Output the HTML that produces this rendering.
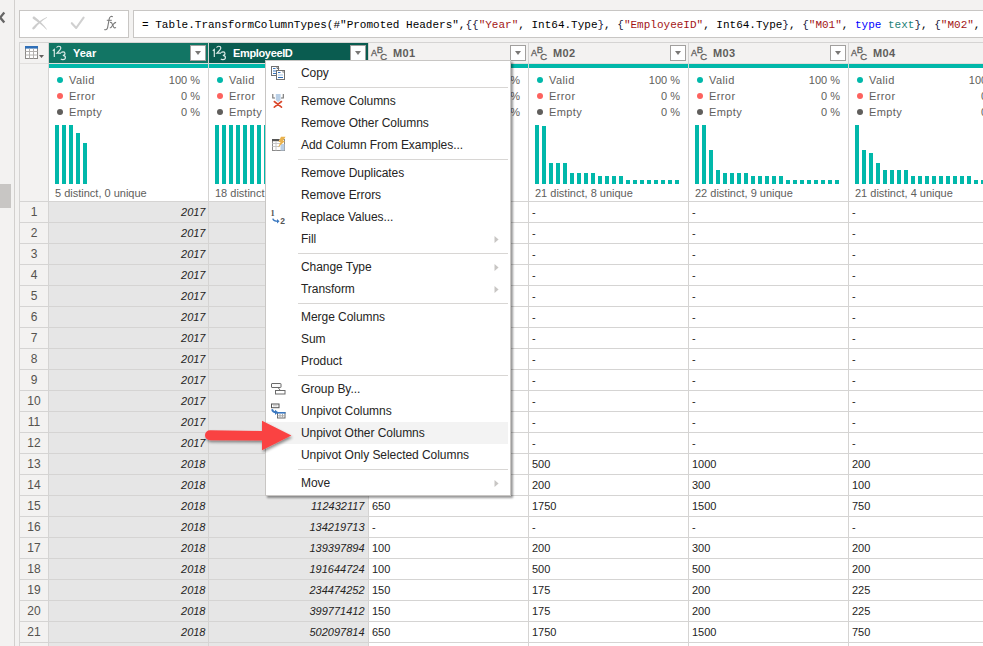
<!DOCTYPE html><html><head><meta charset="utf-8"><style>
*{margin:0;padding:0;box-sizing:border-box}
html,body{width:983px;height:646px;overflow:hidden;background:#f3f2f1}
body{position:relative;font-family:"Liberation Sans",sans-serif;color:#252423}
.a{position:absolute}
.t{position:absolute;white-space:nowrap;line-height:1}
.pl{font-size:11px;color:#605e5c}
.cell{font-size:11px;color:#252423}
.it{font-style:italic}
.mi{position:absolute;left:35px;font-size:12px;letter-spacing:-0.05px;color:#252423;white-space:nowrap;line-height:22px;height:22px}
.sep{position:absolute;left:32px;right:2px;height:1px;background:#d8d6d4}
.sub{position:absolute;left:228px;width:0;height:0;border-top:3.8px solid transparent;border-bottom:3.8px solid transparent;border-left:4.4px solid #c8c6c4}
svg{overflow:visible}
</style></head><body>
<div class="a" style="left:14px;top:0;width:1px;height:646px;background:#d2d0ce"></div>
<div class="a" style="left:0;top:184px;width:11px;height:24px;background:#c8c6c4"></div>
<svg class="a" style="left:0;top:0" width="14" height="40"><polyline points="4.3,12.6 0.2,17.6 4.3,22.6" fill="none" stroke="#666" stroke-width="2.3"/></svg>
<div class="a" style="left:19px;top:10px;width:110px;height:28px;background:#fff;border:1px solid #c8c6c4"></div>
<svg class="a" style="left:0;top:0" width="130" height="40"><path d="M32.6,18.2 C32.4,16.6 33.8,16.2 35,16.9 C39,19.6 43.5,24.5 47.1,29.4 C46.8,29.6 46.5,29.6 46.3,29.4 C42.5,25.5 37.5,21.5 33.3,19 Z" fill="#cdcdcd"/><path d="M33.6,29.5 C32.2,29.6 31.8,28.2 32.8,27.2 C36.5,23.5 41.5,19.5 46.9,17.1 C47.1,17.3 47.1,17.5 46.9,17.7 C42,20.5 38,24.5 35,28.6 Z" fill="#cdcdcd"/><polyline points="71.8,23.2 76.2,28 83.6,17.7" stroke="#d0d0d0" stroke-width="2.1" fill="none" stroke-linecap="round" stroke-linejoin="round"/><path d="M112.8,16.8 C111.2,15.9 109.7,16.6 109.2,18.8 L107.6,27.6 C107.1,29.6 105.6,30.1 104.3,29.4" stroke="#7a7a7a" stroke-width="1.1" fill="none"/><path d="M106.8,20.3 H111.8" stroke="#7a7a7a" stroke-width="1" fill="none"/><path d="M110,22.6 C110.9,22.1 111.6,22.5 112,23.5 L113.6,27 C114.1,28 115,28.1 116,27.4" stroke="#7a7a7a" stroke-width="1.1" fill="none"/><path d="M116.1,22.4 C115,22.4 114.2,23.1 113.2,24.3 L111.6,26.8 C111,27.7 110.3,27.9 109.8,27.6" stroke="#7a7a7a" stroke-width="1.1" fill="none"/></svg>
<div class="a" style="left:133px;top:10px;width:900px;height:28px;background:#fff;border:1px solid #c8c6c4"></div>
<div class="t" style="left:142px;top:20px;font-family:'Liberation Mono',monospace;font-size:11px;color:#000">= Table.TransformColumnTypes(#"Promoted Headers",<span style="color:#1a1a40">{</span><span style="color:#1a1a40">{</span><span style="color:#a31515">"Year"</span>, Int64.Type<span style="color:#1a1a40">}</span>, <span style="color:#1a1a40">{</span><span style="color:#a31515">"EmployeeID"</span>, Int64.Type<span style="color:#1a1a40">}</span>, <span style="color:#1a1a40">{</span><span style="color:#a31515">"M01"</span>, <span style="color:#0000ff">type</span> <span style="color:#1e8277">text</span><span style="color:#1a1a40">}</span>, <span style="color:#1a1a40">{</span><span style="color:#a31515">"M02"</span>, </div>
<div class="a" style="left:19px;top:42px;width:964px;height:1px;background:#d5d4d3"></div>
<div class="a" style="left:19px;top:42px;width:1px;height:604px;background:#d5d4d3"></div>
<div class="a" style="left:20px;top:63px;width:963px;height:1px;background:#e1dfdd"></div>
<div class="a" style="left:49px;top:68px;width:934px;height:133px;background:#fff"></div>
<div class="a" style="left:49px;top:202px;width:319px;height:444px;background:#e6e6e6"></div>
<div class="a" style="left:369px;top:202px;width:614px;height:444px;background:#fff"></div>
<div class="a" style="left:49px;top:43px;width:159px;height:20px;background:#127564"></div>
<div class="a" style="left:209px;top:43px;width:159px;height:20px;background:#0a5c50"></div>
<div class="a" style="left:49px;top:64px;width:934px;height:4px;background:#01b8aa"></div>
<div class="a" style="left:20px;top:201px;width:963px;height:1px;background:#d5d4d3"></div>
<div class="a" style="left:20px;top:222px;width:963px;height:1px;background:#d5d4d3"></div>
<div class="a" style="left:20px;top:243px;width:963px;height:1px;background:#d5d4d3"></div>
<div class="a" style="left:20px;top:264px;width:963px;height:1px;background:#d5d4d3"></div>
<div class="a" style="left:20px;top:285px;width:963px;height:1px;background:#d5d4d3"></div>
<div class="a" style="left:20px;top:306px;width:963px;height:1px;background:#d5d4d3"></div>
<div class="a" style="left:20px;top:327px;width:963px;height:1px;background:#d5d4d3"></div>
<div class="a" style="left:20px;top:348px;width:963px;height:1px;background:#d5d4d3"></div>
<div class="a" style="left:20px;top:369px;width:963px;height:1px;background:#d5d4d3"></div>
<div class="a" style="left:20px;top:390px;width:963px;height:1px;background:#d5d4d3"></div>
<div class="a" style="left:20px;top:411px;width:963px;height:1px;background:#d5d4d3"></div>
<div class="a" style="left:20px;top:432px;width:963px;height:1px;background:#d5d4d3"></div>
<div class="a" style="left:20px;top:453px;width:963px;height:1px;background:#d5d4d3"></div>
<div class="a" style="left:20px;top:474px;width:963px;height:1px;background:#d5d4d3"></div>
<div class="a" style="left:20px;top:495px;width:963px;height:1px;background:#d5d4d3"></div>
<div class="a" style="left:20px;top:516px;width:963px;height:1px;background:#d5d4d3"></div>
<div class="a" style="left:20px;top:537px;width:963px;height:1px;background:#d5d4d3"></div>
<div class="a" style="left:20px;top:558px;width:963px;height:1px;background:#d5d4d3"></div>
<div class="a" style="left:20px;top:579px;width:963px;height:1px;background:#d5d4d3"></div>
<div class="a" style="left:20px;top:600px;width:963px;height:1px;background:#d5d4d3"></div>
<div class="a" style="left:20px;top:621px;width:963px;height:1px;background:#d5d4d3"></div>
<div class="a" style="left:20px;top:642px;width:963px;height:1px;background:#d5d4d3"></div>
<div class="a" style="left:48px;top:42px;width:1px;height:604px;background:#d5d4d3"></div>
<div class="a" style="left:208px;top:42px;width:1px;height:604px;background:#d5d4d3"></div>
<div class="a" style="left:368px;top:42px;width:1px;height:604px;background:#d5d4d3"></div>
<div class="a" style="left:528px;top:42px;width:1px;height:604px;background:#d5d4d3"></div>
<div class="a" style="left:688px;top:42px;width:1px;height:604px;background:#d5d4d3"></div>
<div class="a" style="left:848px;top:42px;width:1px;height:604px;background:#d5d4d3"></div>
<svg class="a" style="left:24px;top:45px" width="22" height="16"><rect x="1.5" y="1.5" width="12" height="12" fill="#fff" stroke="#8a8886" stroke-width="1"/><rect x="1" y="1" width="13" height="2.6" fill="#2f6fb8"/><path d="M1.5,6.5 H13.5 M1.5,10 H13.5 M5.5,3.5 V13.5 M9.5,3.5 V13.5" stroke="#b3b1af" stroke-width="1"/><path d="M15,10 L20,10 L17.5,13 Z" fill="#605e5c"/></svg>
<svg class="a" style="left:0px;top:0" width="70" height="64"><g fill="none" stroke="#dcebe7" stroke-width="1.15"><path d="M52.8,50.7 L54.3,49.4 V56.9"/><path d="M56.6,47.6 C57,46.6 57.9,46.2 58.8,46.2 C60.1,46.2 60.8,47 60.8,48.1 C60.8,49.5 59.6,50.7 56.9,53.1 H61.1"/><path d="M61.2,52.6 C61.7,52 62.4,51.8 63.1,51.8 C64.3,51.8 65,52.5 65,53.5 C65,54.6 64.1,55.3 62.8,55.3 C64.4,55.3 65.4,56.1 65.4,57.4 C65.4,58.8 64.3,59.6 62.9,59.6 C62,59.6 61.3,59.3 60.8,58.8"/></g></svg>
<div class="t" style="left:73px;top:48px;font-size:11px;font-weight:bold;color:#fff">Year</div>
<div class="a" style="left:190px;top:45px;width:16px;height:16px;background:#fff;border:1px solid #a19f9d"></div><div class="a" style="left:194.5px;top:51px;width:0;height:0;border-left:3.5px solid transparent;border-right:3.5px solid transparent;border-top:4px solid #797775"></div>
<svg class="a" style="left:160px;top:0" width="70" height="64"><g fill="none" stroke="#dcebe7" stroke-width="1.15"><path d="M52.8,50.7 L54.3,49.4 V56.9"/><path d="M56.6,47.6 C57,46.6 57.9,46.2 58.8,46.2 C60.1,46.2 60.8,47 60.8,48.1 C60.8,49.5 59.6,50.7 56.9,53.1 H61.1"/><path d="M61.2,52.6 C61.7,52 62.4,51.8 63.1,51.8 C64.3,51.8 65,52.5 65,53.5 C65,54.6 64.1,55.3 62.8,55.3 C64.4,55.3 65.4,56.1 65.4,57.4 C65.4,58.8 64.3,59.6 62.9,59.6 C62,59.6 61.3,59.3 60.8,58.8"/></g></svg>
<div class="t" style="left:233px;top:48px;font-size:11px;font-weight:bold;letter-spacing:-0.35px;color:#fff">EmployeeID</div>
<div class="a" style="left:350px;top:45px;width:16px;height:16px;background:#fff;border:1px solid #a19f9d"></div><div class="a" style="left:354.5px;top:51px;width:0;height:0;border-left:3.5px solid transparent;border-right:3.5px solid transparent;border-top:4px solid #797775"></div>
<div class="t" style="left:371.1px;top:48.8px;font-size:9px;color:#5f5e5c;-webkit-text-stroke:0.3px #5f5e5c">A</div><div class="t" style="left:376.8px;top:44.8px;font-size:9.5px;color:#5f5e5c;-webkit-text-stroke:0.3px #5f5e5c">B</div><div class="t" style="left:380.2px;top:51.8px;font-size:9.5px;color:#5f5e5c;-webkit-text-stroke:0.3px #5f5e5c">C</div>
<div class="t" style="left:393px;top:48px;font-size:11px;font-weight:bold;letter-spacing:0.3px;color:#5f5d5b">M01</div>
<div class="a" style="left:510px;top:45px;width:16px;height:16px;background:#fff;border:1px solid #a19f9d"></div><div class="a" style="left:514.5px;top:51px;width:0;height:0;border-left:3.5px solid transparent;border-right:3.5px solid transparent;border-top:4px solid #797775"></div>
<div class="t" style="left:531.1px;top:48.8px;font-size:9px;color:#5f5e5c;-webkit-text-stroke:0.3px #5f5e5c">A</div><div class="t" style="left:536.8px;top:44.8px;font-size:9.5px;color:#5f5e5c;-webkit-text-stroke:0.3px #5f5e5c">B</div><div class="t" style="left:540.2px;top:51.8px;font-size:9.5px;color:#5f5e5c;-webkit-text-stroke:0.3px #5f5e5c">C</div>
<div class="t" style="left:553px;top:48px;font-size:11px;font-weight:bold;letter-spacing:0.3px;color:#5f5d5b">M02</div>
<div class="a" style="left:670px;top:45px;width:16px;height:16px;background:#fff;border:1px solid #a19f9d"></div><div class="a" style="left:674.5px;top:51px;width:0;height:0;border-left:3.5px solid transparent;border-right:3.5px solid transparent;border-top:4px solid #797775"></div>
<div class="t" style="left:691.1px;top:48.8px;font-size:9px;color:#5f5e5c;-webkit-text-stroke:0.3px #5f5e5c">A</div><div class="t" style="left:696.8px;top:44.8px;font-size:9.5px;color:#5f5e5c;-webkit-text-stroke:0.3px #5f5e5c">B</div><div class="t" style="left:700.2px;top:51.8px;font-size:9.5px;color:#5f5e5c;-webkit-text-stroke:0.3px #5f5e5c">C</div>
<div class="t" style="left:713px;top:48px;font-size:11px;font-weight:bold;letter-spacing:0.3px;color:#5f5d5b">M03</div>
<div class="a" style="left:830px;top:45px;width:16px;height:16px;background:#fff;border:1px solid #a19f9d"></div><div class="a" style="left:834.5px;top:51px;width:0;height:0;border-left:3.5px solid transparent;border-right:3.5px solid transparent;border-top:4px solid #797775"></div>
<div class="t" style="left:851.1px;top:48.8px;font-size:9px;color:#5f5e5c;-webkit-text-stroke:0.3px #5f5e5c">A</div><div class="t" style="left:856.8px;top:44.8px;font-size:9.5px;color:#5f5e5c;-webkit-text-stroke:0.3px #5f5e5c">B</div><div class="t" style="left:860.2px;top:51.8px;font-size:9.5px;color:#5f5e5c;-webkit-text-stroke:0.3px #5f5e5c">C</div>
<div class="t" style="left:873px;top:48px;font-size:11px;font-weight:bold;letter-spacing:0.3px;color:#5f5d5b">M04</div>
<div class="a" style="left:990px;top:45px;width:16px;height:16px;background:#fff;border:1px solid #a19f9d"></div><div class="a" style="left:994.5px;top:51px;width:0;height:0;border-left:3.5px solid transparent;border-right:3.5px solid transparent;border-top:4px solid #797775"></div>
<div class="a" style="left:57px;top:77px;width:6px;height:6px;border-radius:3px;background:#01b8aa"></div>
<div class="t pl" style="left:69px;top:75px;letter-spacing:0.4px">Valid</div>
<div class="t pl" style="left:129px;width:71px;text-align:right;top:75px">100 %</div>
<div class="a" style="left:57px;top:93px;width:6px;height:6px;border-radius:3px;background:#fd625e"></div>
<div class="t pl" style="left:69px;top:91px;letter-spacing:0.4px">Error</div>
<div class="t pl" style="left:129px;width:71px;text-align:right;top:91px">0 %</div>
<div class="a" style="left:57px;top:109px;width:6px;height:6px;border-radius:3px;background:#605e5c"></div>
<div class="t pl" style="left:69px;top:107px;letter-spacing:0.4px">Empty</div>
<div class="t pl" style="left:129px;width:71px;text-align:right;top:107px">0 %</div>
<div class="a" style="left:55px;top:125px;width:4px;height:59px;background:#01b8aa"></div>
<div class="a" style="left:62px;top:125px;width:4px;height:59px;background:#01b8aa"></div>
<div class="a" style="left:69px;top:125px;width:4px;height:59px;background:#01b8aa"></div>
<div class="a" style="left:76px;top:133px;width:4px;height:51px;background:#01b8aa"></div>
<div class="a" style="left:83px;top:143px;width:4px;height:41px;background:#01b8aa"></div>
<div class="t pl" style="left:55px;top:188px">5 distinct, 0 unique</div>
<div class="a" style="left:217px;top:77px;width:6px;height:6px;border-radius:3px;background:#01b8aa"></div>
<div class="t pl" style="left:229px;top:75px;letter-spacing:0.4px">Valid</div>
<div class="t pl" style="left:289px;width:71px;text-align:right;top:75px">100 %</div>
<div class="a" style="left:217px;top:93px;width:6px;height:6px;border-radius:3px;background:#fd625e"></div>
<div class="t pl" style="left:229px;top:91px;letter-spacing:0.4px">Error</div>
<div class="t pl" style="left:289px;width:71px;text-align:right;top:91px">0 %</div>
<div class="a" style="left:217px;top:109px;width:6px;height:6px;border-radius:3px;background:#605e5c"></div>
<div class="t pl" style="left:229px;top:107px;letter-spacing:0.4px">Empty</div>
<div class="t pl" style="left:289px;width:71px;text-align:right;top:107px">0 %</div>
<div class="a" style="left:215px;top:125px;width:4px;height:59px;background:#01b8aa"></div>
<div class="a" style="left:222px;top:125px;width:4px;height:59px;background:#01b8aa"></div>
<div class="a" style="left:229px;top:125px;width:4px;height:59px;background:#01b8aa"></div>
<div class="a" style="left:236px;top:125px;width:4px;height:59px;background:#01b8aa"></div>
<div class="a" style="left:243px;top:125px;width:4px;height:59px;background:#01b8aa"></div>
<div class="a" style="left:250px;top:125px;width:4px;height:59px;background:#01b8aa"></div>
<div class="a" style="left:257px;top:125px;width:4px;height:59px;background:#01b8aa"></div>
<div class="a" style="left:264px;top:125px;width:4px;height:59px;background:#01b8aa"></div>
<div class="a" style="left:271px;top:125px;width:4px;height:59px;background:#01b8aa"></div>
<div class="a" style="left:278px;top:125px;width:4px;height:59px;background:#01b8aa"></div>
<div class="a" style="left:285px;top:125px;width:4px;height:59px;background:#01b8aa"></div>
<div class="a" style="left:292px;top:125px;width:4px;height:59px;background:#01b8aa"></div>
<div class="a" style="left:299px;top:125px;width:4px;height:59px;background:#01b8aa"></div>
<div class="a" style="left:306px;top:125px;width:4px;height:59px;background:#01b8aa"></div>
<div class="a" style="left:313px;top:125px;width:4px;height:59px;background:#01b8aa"></div>
<div class="a" style="left:320px;top:125px;width:4px;height:59px;background:#01b8aa"></div>
<div class="a" style="left:327px;top:125px;width:4px;height:59px;background:#01b8aa"></div>
<div class="a" style="left:334px;top:125px;width:4px;height:59px;background:#01b8aa"></div>
<div class="t pl" style="left:215px;top:188px">18 distinct, 0 unique</div>
<div class="a" style="left:377px;top:77px;width:6px;height:6px;border-radius:3px;background:#01b8aa"></div>
<div class="t pl" style="left:389px;top:75px;letter-spacing:0.4px">Valid</div>
<div class="t pl" style="left:449px;width:71px;text-align:right;top:75px">100 %</div>
<div class="a" style="left:377px;top:93px;width:6px;height:6px;border-radius:3px;background:#fd625e"></div>
<div class="t pl" style="left:389px;top:91px;letter-spacing:0.4px">Error</div>
<div class="t pl" style="left:449px;width:71px;text-align:right;top:91px">0 %</div>
<div class="a" style="left:377px;top:109px;width:6px;height:6px;border-radius:3px;background:#605e5c"></div>
<div class="t pl" style="left:389px;top:107px;letter-spacing:0.4px">Empty</div>
<div class="t pl" style="left:449px;width:71px;text-align:right;top:107px">0 %</div>
<div class="a" style="left:375px;top:125px;width:4px;height:59px;background:#01b8aa"></div>
<div class="a" style="left:382px;top:125px;width:4px;height:59px;background:#01b8aa"></div>
<div class="a" style="left:389px;top:125px;width:4px;height:59px;background:#01b8aa"></div>
<div class="a" style="left:396px;top:125px;width:4px;height:59px;background:#01b8aa"></div>
<div class="a" style="left:403px;top:125px;width:4px;height:59px;background:#01b8aa"></div>
<div class="a" style="left:410px;top:125px;width:4px;height:59px;background:#01b8aa"></div>
<div class="a" style="left:417px;top:125px;width:4px;height:59px;background:#01b8aa"></div>
<div class="a" style="left:424px;top:125px;width:4px;height:59px;background:#01b8aa"></div>
<div class="a" style="left:431px;top:125px;width:4px;height:59px;background:#01b8aa"></div>
<div class="a" style="left:438px;top:125px;width:4px;height:59px;background:#01b8aa"></div>
<div class="a" style="left:445px;top:125px;width:4px;height:59px;background:#01b8aa"></div>
<div class="a" style="left:452px;top:125px;width:4px;height:59px;background:#01b8aa"></div>
<div class="a" style="left:459px;top:125px;width:4px;height:59px;background:#01b8aa"></div>
<div class="a" style="left:466px;top:125px;width:4px;height:59px;background:#01b8aa"></div>
<div class="a" style="left:473px;top:125px;width:4px;height:59px;background:#01b8aa"></div>
<div class="a" style="left:480px;top:125px;width:4px;height:59px;background:#01b8aa"></div>
<div class="a" style="left:487px;top:125px;width:4px;height:59px;background:#01b8aa"></div>
<div class="a" style="left:494px;top:125px;width:4px;height:59px;background:#01b8aa"></div>
<div class="t pl" style="left:375px;top:188px">21 distinct, 8 unique</div>
<div class="a" style="left:537px;top:77px;width:6px;height:6px;border-radius:3px;background:#01b8aa"></div>
<div class="t pl" style="left:549px;top:75px;letter-spacing:0.4px">Valid</div>
<div class="t pl" style="left:609px;width:71px;text-align:right;top:75px">100 %</div>
<div class="a" style="left:537px;top:93px;width:6px;height:6px;border-radius:3px;background:#fd625e"></div>
<div class="t pl" style="left:549px;top:91px;letter-spacing:0.4px">Error</div>
<div class="t pl" style="left:609px;width:71px;text-align:right;top:91px">0 %</div>
<div class="a" style="left:537px;top:109px;width:6px;height:6px;border-radius:3px;background:#605e5c"></div>
<div class="t pl" style="left:549px;top:107px;letter-spacing:0.4px">Empty</div>
<div class="t pl" style="left:609px;width:71px;text-align:right;top:107px">0 %</div>
<div class="a" style="left:535px;top:125px;width:4px;height:59px;background:#01b8aa"></div>
<div class="a" style="left:542px;top:126px;width:4px;height:58px;background:#01b8aa"></div>
<div class="a" style="left:549px;top:163px;width:4px;height:21px;background:#01b8aa"></div>
<div class="a" style="left:556px;top:163px;width:4px;height:21px;background:#01b8aa"></div>
<div class="a" style="left:563px;top:163px;width:4px;height:21px;background:#01b8aa"></div>
<div class="a" style="left:570px;top:173px;width:4px;height:11px;background:#01b8aa"></div>
<div class="a" style="left:577px;top:173px;width:4px;height:11px;background:#01b8aa"></div>
<div class="a" style="left:584px;top:173px;width:4px;height:11px;background:#01b8aa"></div>
<div class="a" style="left:591px;top:173px;width:4px;height:11px;background:#01b8aa"></div>
<div class="a" style="left:598px;top:176px;width:4px;height:8px;background:#01b8aa"></div>
<div class="a" style="left:605px;top:176px;width:4px;height:8px;background:#01b8aa"></div>
<div class="a" style="left:612px;top:176px;width:4px;height:8px;background:#01b8aa"></div>
<div class="a" style="left:619px;top:176px;width:4px;height:8px;background:#01b8aa"></div>
<div class="a" style="left:626px;top:180px;width:4px;height:4px;background:#01b8aa"></div>
<div class="a" style="left:633px;top:180px;width:4px;height:4px;background:#01b8aa"></div>
<div class="a" style="left:640px;top:180px;width:4px;height:4px;background:#01b8aa"></div>
<div class="a" style="left:647px;top:180px;width:4px;height:4px;background:#01b8aa"></div>
<div class="a" style="left:654px;top:180px;width:4px;height:4px;background:#01b8aa"></div>
<div class="a" style="left:661px;top:180px;width:4px;height:4px;background:#01b8aa"></div>
<div class="a" style="left:668px;top:180px;width:4px;height:4px;background:#01b8aa"></div>
<div class="a" style="left:675px;top:180px;width:4px;height:4px;background:#01b8aa"></div>
<div class="t pl" style="left:535px;top:188px">21 distinct, 8 unique</div>
<div class="a" style="left:697px;top:77px;width:6px;height:6px;border-radius:3px;background:#01b8aa"></div>
<div class="t pl" style="left:709px;top:75px;letter-spacing:0.4px">Valid</div>
<div class="t pl" style="left:769px;width:71px;text-align:right;top:75px">100 %</div>
<div class="a" style="left:697px;top:93px;width:6px;height:6px;border-radius:3px;background:#fd625e"></div>
<div class="t pl" style="left:709px;top:91px;letter-spacing:0.4px">Error</div>
<div class="t pl" style="left:769px;width:71px;text-align:right;top:91px">0 %</div>
<div class="a" style="left:697px;top:109px;width:6px;height:6px;border-radius:3px;background:#605e5c"></div>
<div class="t pl" style="left:709px;top:107px;letter-spacing:0.4px">Empty</div>
<div class="t pl" style="left:769px;width:71px;text-align:right;top:107px">0 %</div>
<div class="a" style="left:695px;top:125px;width:4px;height:59px;background:#01b8aa"></div>
<div class="a" style="left:702px;top:125px;width:4px;height:59px;background:#01b8aa"></div>
<div class="a" style="left:709px;top:150px;width:4px;height:34px;background:#01b8aa"></div>
<div class="a" style="left:716px;top:170px;width:4px;height:14px;background:#01b8aa"></div>
<div class="a" style="left:723px;top:173px;width:4px;height:11px;background:#01b8aa"></div>
<div class="a" style="left:730px;top:173px;width:4px;height:11px;background:#01b8aa"></div>
<div class="a" style="left:737px;top:173px;width:4px;height:11px;background:#01b8aa"></div>
<div class="a" style="left:744px;top:173px;width:4px;height:11px;background:#01b8aa"></div>
<div class="a" style="left:751px;top:176px;width:4px;height:8px;background:#01b8aa"></div>
<div class="a" style="left:758px;top:176px;width:4px;height:8px;background:#01b8aa"></div>
<div class="a" style="left:765px;top:176px;width:4px;height:8px;background:#01b8aa"></div>
<div class="a" style="left:772px;top:176px;width:4px;height:8px;background:#01b8aa"></div>
<div class="a" style="left:779px;top:176px;width:4px;height:8px;background:#01b8aa"></div>
<div class="a" style="left:786px;top:180px;width:4px;height:4px;background:#01b8aa"></div>
<div class="a" style="left:793px;top:180px;width:4px;height:4px;background:#01b8aa"></div>
<div class="a" style="left:800px;top:180px;width:4px;height:4px;background:#01b8aa"></div>
<div class="a" style="left:807px;top:180px;width:4px;height:4px;background:#01b8aa"></div>
<div class="a" style="left:814px;top:180px;width:4px;height:4px;background:#01b8aa"></div>
<div class="a" style="left:821px;top:180px;width:4px;height:4px;background:#01b8aa"></div>
<div class="a" style="left:828px;top:180px;width:4px;height:4px;background:#01b8aa"></div>
<div class="a" style="left:835px;top:180px;width:4px;height:4px;background:#01b8aa"></div>
<div class="t pl" style="left:695px;top:188px">22 distinct, 9 unique</div>
<div class="a" style="left:857px;top:77px;width:6px;height:6px;border-radius:3px;background:#01b8aa"></div>
<div class="t pl" style="left:869px;top:75px;letter-spacing:0.4px">Valid</div>
<div class="t pl" style="left:929px;width:71px;text-align:right;top:75px">100 %</div>
<div class="a" style="left:857px;top:93px;width:6px;height:6px;border-radius:3px;background:#fd625e"></div>
<div class="t pl" style="left:869px;top:91px;letter-spacing:0.4px">Error</div>
<div class="t pl" style="left:929px;width:71px;text-align:right;top:91px">0 %</div>
<div class="a" style="left:857px;top:109px;width:6px;height:6px;border-radius:3px;background:#605e5c"></div>
<div class="t pl" style="left:869px;top:107px;letter-spacing:0.4px">Empty</div>
<div class="t pl" style="left:929px;width:71px;text-align:right;top:107px">0 %</div>
<div class="a" style="left:855px;top:125px;width:4px;height:59px;background:#01b8aa"></div>
<div class="a" style="left:862px;top:150px;width:4px;height:34px;background:#01b8aa"></div>
<div class="a" style="left:869px;top:153px;width:4px;height:31px;background:#01b8aa"></div>
<div class="a" style="left:876px;top:163px;width:4px;height:21px;background:#01b8aa"></div>
<div class="a" style="left:883px;top:170px;width:4px;height:14px;background:#01b8aa"></div>
<div class="a" style="left:890px;top:170px;width:4px;height:14px;background:#01b8aa"></div>
<div class="a" style="left:897px;top:170px;width:4px;height:14px;background:#01b8aa"></div>
<div class="a" style="left:904px;top:170px;width:4px;height:14px;background:#01b8aa"></div>
<div class="a" style="left:911px;top:176px;width:4px;height:8px;background:#01b8aa"></div>
<div class="a" style="left:918px;top:176px;width:4px;height:8px;background:#01b8aa"></div>
<div class="a" style="left:925px;top:176px;width:4px;height:8px;background:#01b8aa"></div>
<div class="a" style="left:932px;top:176px;width:4px;height:8px;background:#01b8aa"></div>
<div class="a" style="left:939px;top:176px;width:4px;height:8px;background:#01b8aa"></div>
<div class="a" style="left:946px;top:176px;width:4px;height:8px;background:#01b8aa"></div>
<div class="a" style="left:953px;top:176px;width:4px;height:8px;background:#01b8aa"></div>
<div class="a" style="left:960px;top:176px;width:4px;height:8px;background:#01b8aa"></div>
<div class="a" style="left:967px;top:176px;width:4px;height:8px;background:#01b8aa"></div>
<div class="a" style="left:974px;top:180px;width:4px;height:4px;background:#01b8aa"></div>
<div class="a" style="left:981px;top:180px;width:4px;height:4px;background:#01b8aa"></div>
<div class="a" style="left:988px;top:180px;width:4px;height:4px;background:#01b8aa"></div>
<div class="a" style="left:995px;top:180px;width:4px;height:4px;background:#01b8aa"></div>
<div class="t pl" style="left:855px;top:188px">21 distinct, 4 unique</div>
<div class="t" style="left:20px;width:28px;text-align:center;top:206px;font-size:12px;color:#55534f">1</div>
<div class="t cell it" style="left:49px;width:156.5px;text-align:right;top:207px">2017</div>
<div class="t cell" style="left:372px;top:207px">-</div>
<div class="t cell" style="left:532px;top:207px">-</div>
<div class="t cell" style="left:692px;top:207px">-</div>
<div class="t cell" style="left:852px;top:207px">-</div>
<div class="t" style="left:20px;width:28px;text-align:center;top:227px;font-size:12px;color:#55534f">2</div>
<div class="t cell it" style="left:49px;width:156.5px;text-align:right;top:228px">2017</div>
<div class="t cell" style="left:372px;top:228px">-</div>
<div class="t cell" style="left:532px;top:228px">-</div>
<div class="t cell" style="left:692px;top:228px">-</div>
<div class="t cell" style="left:852px;top:228px">-</div>
<div class="t" style="left:20px;width:28px;text-align:center;top:248px;font-size:12px;color:#55534f">3</div>
<div class="t cell it" style="left:49px;width:156.5px;text-align:right;top:249px">2017</div>
<div class="t cell" style="left:372px;top:249px">-</div>
<div class="t cell" style="left:532px;top:249px">-</div>
<div class="t cell" style="left:692px;top:249px">-</div>
<div class="t cell" style="left:852px;top:249px">-</div>
<div class="t" style="left:20px;width:28px;text-align:center;top:269px;font-size:12px;color:#55534f">4</div>
<div class="t cell it" style="left:49px;width:156.5px;text-align:right;top:270px">2017</div>
<div class="t cell" style="left:372px;top:270px">-</div>
<div class="t cell" style="left:532px;top:270px">-</div>
<div class="t cell" style="left:692px;top:270px">-</div>
<div class="t cell" style="left:852px;top:270px">-</div>
<div class="t" style="left:20px;width:28px;text-align:center;top:290px;font-size:12px;color:#55534f">5</div>
<div class="t cell it" style="left:49px;width:156.5px;text-align:right;top:291px">2017</div>
<div class="t cell" style="left:372px;top:291px">-</div>
<div class="t cell" style="left:532px;top:291px">-</div>
<div class="t cell" style="left:692px;top:291px">-</div>
<div class="t cell" style="left:852px;top:291px">-</div>
<div class="t" style="left:20px;width:28px;text-align:center;top:311px;font-size:12px;color:#55534f">6</div>
<div class="t cell it" style="left:49px;width:156.5px;text-align:right;top:312px">2017</div>
<div class="t cell" style="left:372px;top:312px">-</div>
<div class="t cell" style="left:532px;top:312px">-</div>
<div class="t cell" style="left:692px;top:312px">-</div>
<div class="t cell" style="left:852px;top:312px">-</div>
<div class="t" style="left:20px;width:28px;text-align:center;top:332px;font-size:12px;color:#55534f">7</div>
<div class="t cell it" style="left:49px;width:156.5px;text-align:right;top:333px">2017</div>
<div class="t cell" style="left:372px;top:333px">-</div>
<div class="t cell" style="left:532px;top:333px">-</div>
<div class="t cell" style="left:692px;top:333px">-</div>
<div class="t cell" style="left:852px;top:333px">-</div>
<div class="t" style="left:20px;width:28px;text-align:center;top:353px;font-size:12px;color:#55534f">8</div>
<div class="t cell it" style="left:49px;width:156.5px;text-align:right;top:354px">2017</div>
<div class="t cell" style="left:372px;top:354px">-</div>
<div class="t cell" style="left:532px;top:354px">-</div>
<div class="t cell" style="left:692px;top:354px">-</div>
<div class="t cell" style="left:852px;top:354px">-</div>
<div class="t" style="left:20px;width:28px;text-align:center;top:374px;font-size:12px;color:#55534f">9</div>
<div class="t cell it" style="left:49px;width:156.5px;text-align:right;top:375px">2017</div>
<div class="t cell" style="left:372px;top:375px">-</div>
<div class="t cell" style="left:532px;top:375px">-</div>
<div class="t cell" style="left:692px;top:375px">-</div>
<div class="t cell" style="left:852px;top:375px">-</div>
<div class="t" style="left:20px;width:28px;text-align:center;top:395px;font-size:12px;color:#55534f">10</div>
<div class="t cell it" style="left:49px;width:156.5px;text-align:right;top:396px">2017</div>
<div class="t cell" style="left:372px;top:396px">-</div>
<div class="t cell" style="left:532px;top:396px">-</div>
<div class="t cell" style="left:692px;top:396px">-</div>
<div class="t cell" style="left:852px;top:396px">-</div>
<div class="t" style="left:20px;width:28px;text-align:center;top:416px;font-size:12px;color:#55534f">11</div>
<div class="t cell it" style="left:49px;width:156.5px;text-align:right;top:417px">2017</div>
<div class="t cell" style="left:372px;top:417px">-</div>
<div class="t cell" style="left:532px;top:417px">-</div>
<div class="t cell" style="left:692px;top:417px">-</div>
<div class="t cell" style="left:852px;top:417px">-</div>
<div class="t" style="left:20px;width:28px;text-align:center;top:437px;font-size:12px;color:#55534f">12</div>
<div class="t cell it" style="left:49px;width:156.5px;text-align:right;top:438px">2017</div>
<div class="t cell" style="left:372px;top:438px">-</div>
<div class="t cell" style="left:532px;top:438px">-</div>
<div class="t cell" style="left:692px;top:438px">-</div>
<div class="t cell" style="left:852px;top:438px">-</div>
<div class="t" style="left:20px;width:28px;text-align:center;top:458px;font-size:12px;color:#55534f">13</div>
<div class="t cell it" style="left:49px;width:156.5px;text-align:right;top:459px">2018</div>
<div class="t cell" style="left:532px;top:459px">500</div>
<div class="t cell" style="left:692px;top:459px">1000</div>
<div class="t cell" style="left:852px;top:459px">200</div>
<div class="t" style="left:20px;width:28px;text-align:center;top:479px;font-size:12px;color:#55534f">14</div>
<div class="t cell it" style="left:49px;width:156.5px;text-align:right;top:480px">2018</div>
<div class="t cell" style="left:532px;top:480px">200</div>
<div class="t cell" style="left:692px;top:480px">300</div>
<div class="t cell" style="left:852px;top:480px">100</div>
<div class="t" style="left:20px;width:28px;text-align:center;top:500px;font-size:12px;color:#55534f">15</div>
<div class="t cell it" style="left:49px;width:156.5px;text-align:right;top:501px">2018</div>
<div class="t cell it" style="left:209px;width:155.5px;text-align:right;top:501px">112432117</div>
<div class="t cell" style="left:372px;top:501px">650</div>
<div class="t cell" style="left:532px;top:501px">1750</div>
<div class="t cell" style="left:692px;top:501px">1500</div>
<div class="t cell" style="left:852px;top:501px">750</div>
<div class="t" style="left:20px;width:28px;text-align:center;top:521px;font-size:12px;color:#55534f">16</div>
<div class="t cell it" style="left:49px;width:156.5px;text-align:right;top:522px">2018</div>
<div class="t cell it" style="left:209px;width:155.5px;text-align:right;top:522px">134219713</div>
<div class="t cell" style="left:372px;top:522px">-</div>
<div class="t cell" style="left:532px;top:522px">-</div>
<div class="t cell" style="left:692px;top:522px">-</div>
<div class="t cell" style="left:852px;top:522px">-</div>
<div class="t" style="left:20px;width:28px;text-align:center;top:542px;font-size:12px;color:#55534f">17</div>
<div class="t cell it" style="left:49px;width:156.5px;text-align:right;top:543px">2018</div>
<div class="t cell it" style="left:209px;width:155.5px;text-align:right;top:543px">139397894</div>
<div class="t cell" style="left:372px;top:543px">100</div>
<div class="t cell" style="left:532px;top:543px">200</div>
<div class="t cell" style="left:692px;top:543px">300</div>
<div class="t cell" style="left:852px;top:543px">200</div>
<div class="t" style="left:20px;width:28px;text-align:center;top:563px;font-size:12px;color:#55534f">18</div>
<div class="t cell it" style="left:49px;width:156.5px;text-align:right;top:564px">2018</div>
<div class="t cell it" style="left:209px;width:155.5px;text-align:right;top:564px">191644724</div>
<div class="t cell" style="left:372px;top:564px">100</div>
<div class="t cell" style="left:532px;top:564px">500</div>
<div class="t cell" style="left:692px;top:564px">500</div>
<div class="t cell" style="left:852px;top:564px">200</div>
<div class="t" style="left:20px;width:28px;text-align:center;top:584px;font-size:12px;color:#55534f">19</div>
<div class="t cell it" style="left:49px;width:156.5px;text-align:right;top:585px">2018</div>
<div class="t cell it" style="left:209px;width:155.5px;text-align:right;top:585px">234474252</div>
<div class="t cell" style="left:372px;top:585px">150</div>
<div class="t cell" style="left:532px;top:585px">175</div>
<div class="t cell" style="left:692px;top:585px">200</div>
<div class="t cell" style="left:852px;top:585px">225</div>
<div class="t" style="left:20px;width:28px;text-align:center;top:605px;font-size:12px;color:#55534f">20</div>
<div class="t cell it" style="left:49px;width:156.5px;text-align:right;top:606px">2018</div>
<div class="t cell it" style="left:209px;width:155.5px;text-align:right;top:606px">399771412</div>
<div class="t cell" style="left:372px;top:606px">150</div>
<div class="t cell" style="left:532px;top:606px">175</div>
<div class="t cell" style="left:692px;top:606px">200</div>
<div class="t cell" style="left:852px;top:606px">225</div>
<div class="t" style="left:20px;width:28px;text-align:center;top:626px;font-size:12px;color:#55534f">21</div>
<div class="t cell it" style="left:49px;width:156.5px;text-align:right;top:627px">2018</div>
<div class="t cell it" style="left:209px;width:155.5px;text-align:right;top:627px">502097814</div>
<div class="t cell" style="left:372px;top:627px">650</div>
<div class="t cell" style="left:532px;top:627px">1750</div>
<div class="t cell" style="left:692px;top:627px">1500</div>
<div class="t cell" style="left:852px;top:627px">750</div>
<div class="a" style="left:265px;top:60px;width:246px;height:436px;background:#fff;border:1px solid #c8c6c4;box-shadow:2px 2px 2px rgba(0,0,0,0.4)">
<div class="mi" style="top:1px">Copy</div>
<div class="sep" style="top:26px"></div>
<div class="mi" style="top:29px">Remove Columns</div>
<div class="mi" style="top:51px">Remove Other Columns</div>
<div class="mi" style="top:73px">Add Column From Examples...</div>
<div class="sep" style="top:98px"></div>
<div class="mi" style="top:101px">Remove Duplicates</div>
<div class="mi" style="top:123px">Remove Errors</div>
<div class="mi" style="top:145px">Replace Values...</div>
<div class="mi" style="top:167px">Fill</div>
<svg class="a" style="left:227.5px;top:174px" width="6" height="9"><polygon points="0.5,0.9 4.6,4.4 0.5,7.9" fill="#c8c6c4"/></svg>
<div class="sep" style="top:192px"></div>
<div class="mi" style="top:195px">Change Type</div>
<svg class="a" style="left:227.5px;top:202px" width="6" height="9"><polygon points="0.5,0.9 4.6,4.4 0.5,7.9" fill="#c8c6c4"/></svg>
<div class="mi" style="top:217px">Transform</div>
<svg class="a" style="left:227.5px;top:224px" width="6" height="9"><polygon points="0.5,0.9 4.6,4.4 0.5,7.9" fill="#c8c6c4"/></svg>
<div class="sep" style="top:242px"></div>
<div class="mi" style="top:245px">Merge Columns</div>
<div class="mi" style="top:267px">Sum</div>
<div class="mi" style="top:289px">Product</div>
<div class="sep" style="top:314px"></div>
<div class="mi" style="top:317px">Group By...</div>
<div class="mi" style="top:339px">Unpivot Columns</div>
<div class="a" style="left:0;top:361px;width:242px;height:22px;background:#f3f3f3"></div>
<div class="mi" style="top:361px">Unpivot Other Columns</div>
<div class="mi" style="top:383px">Unpivot Only Selected Columns</div>
<div class="sep" style="top:408px"></div>
<div class="mi" style="top:411px">Move</div>
<svg class="a" style="left:227.5px;top:418px" width="6" height="9"><polygon points="0.5,0.9 4.6,4.4 0.5,7.9" fill="#c8c6c4"/></svg>
<svg class="a" style="left:-266px;top:-61px" width="520" height="500" shape-rendering="geometricPrecision">
<path d="M271.5,66.5 H277 L279,68.5" fill="none" stroke="#707070"/>
<rect x="271.5" y="66.5" width="7" height="9" fill="#fff" stroke="#707070"/>
<path d="M277,66.5 V68.5 H279" fill="none" stroke="#707070"/>
<path d="M273,68.5 H275.5 M273,71 H277 M273,73.5 H277" stroke="#3a78c0" stroke-width="1"/>
<rect x="276.5" y="70.5" width="8" height="9" fill="#fff" stroke="#707070"/>
<path d="M282.5,70.5 L284.5,72.5 H282.5 Z" fill="#707070"/>
<path d="M278,72.5 H280.5" stroke="#3a78c0"/>
<path d="M278,75 H283" stroke="#9fbfe0"/>
<path d="M278,77.5 H283" stroke="#2f6db5"/>

<path d="M272.8,94 V98 H275 M283.3,94 V98 H281" fill="none" stroke="#707070" stroke-width="1.1"/>
<path d="M275.8,94 H280.6 V100 L278.2,102 L275.8,100 Z" fill="#b9cfe6"/>
<path d="M274.3,101.5 L281.5,107.2 M281.5,101.5 L274.3,107.2" stroke="#d9472b" stroke-width="1.6" stroke-linecap="round"/>

<rect x="272.5" y="139.5" width="12" height="11" fill="#fff" stroke="#8a8a8a"/>
<rect x="272" y="139" width="7" height="2.2" fill="#555"/>
<path d="M272.5,143.5 H280 M272.5,146.5 H280 M276,141 V150.5" stroke="#c8c8c8"/>
<path d="M280.5,144 H284.5 V150.5 H280.5 Z" fill="#b9cfe6"/>
<path d="M281,136.7 H285.5 L283,141 H285 L278,147.5 L280.5,142 H278.5 Z" fill="#e9b24e"/>

<text x="270.6" y="216.4" font-family="Liberation Serif" font-size="8.5" font-weight="bold" fill="#555">1</text>
<path d="M272.8,218.6 C273.5,221 275.5,221.3 278,221.3" fill="none" stroke="#3a78c0" stroke-width="1.5"/>
<path d="M277,219 L279.5,221.3 L277,223.6 Z" fill="#3a78c0"/>
<text x="280.2" y="224" font-family="Liberation Sans" font-size="8.5" font-weight="bold" fill="#555">2</text>

<rect x="271.5" y="383.5" width="9.5" height="4" rx="0.5" fill="#fafafa" stroke="#6a6a6a"/>
<path d="M278,387.5 L280,390" stroke="#6a6a6a"/>
<rect x="275.5" y="390.5" width="9.5" height="3.5" fill="#fff" stroke="#6a6a6a"/>

<rect x="271.5" y="404" width="7.5" height="3.7" fill="#fff" stroke="#555"/>
<path d="M273,405.8 H277.5" stroke="#bbb"/>
<path d="M272,409.2 C272.6,411.6 274.2,412.3 275.8,412.3" fill="none" stroke="#3a78c0" stroke-width="1.8"/>
<path d="M275,409.8 L278.2,412.3 L275,414.9 Z" fill="#3a78c0"/>
<rect x="277.5" y="412.5" width="7.5" height="5.5" fill="#fff" stroke="#6a6a6a"/>
<rect x="277" y="412" width="8.5" height="1.6" fill="#3a78c0"/>
<path d="M280,414 V418 M282.5,414 V418 M277.5,415.8 H285" stroke="#aaa"/>
</svg>
</div>
<svg class="a" style="left:195px;top:410px" width="110" height="50"><defs><filter id="sh" x="-20%" y="-20%" width="150%" height="160%"><feGaussianBlur in="SourceAlpha" stdDeviation="1.5"/><feOffset dx="1" dy="2"/><feComponentTransfer><feFuncA type="linear" slope="0.45"/></feComponentTransfer><feMerge><feMergeNode/><feMergeNode in="SourceGraphic"/></feMerge></filter></defs><g filter="url(#sh)"><path d="M15,20.2 L67,21 L67,10.7 L96.4,25.4 L67,40.3 L67,30.6 L15,30.2 A5,5 0 0 1 15,20.2 Z" fill="#fa4343"/></g></svg>
</body></html>
